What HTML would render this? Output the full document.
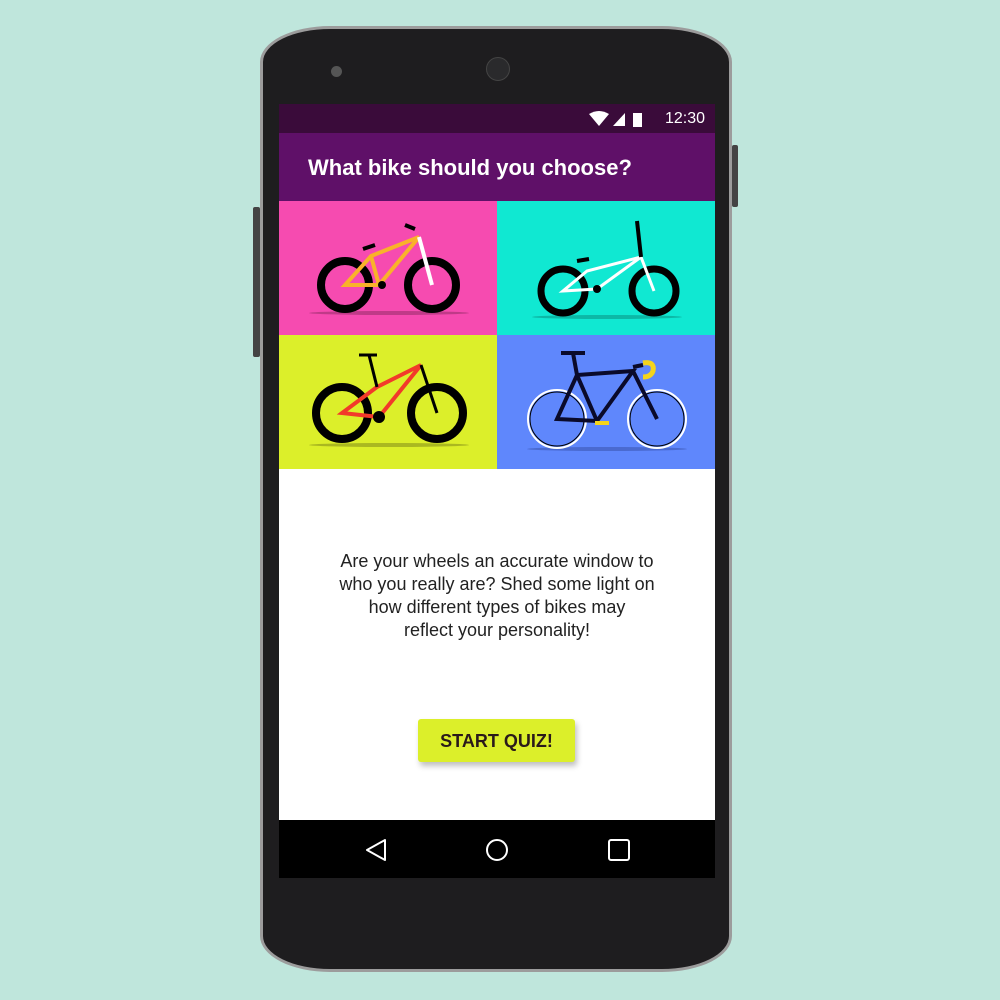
<!DOCTYPE html>
<html><head><style>
body{margin:0;width:1000px;height:1000px;background:#bfe6dc;position:relative;overflow:hidden;font-family:"Liberation Sans",sans-serif}
.phone{position:absolute;left:260px;top:26px;width:472px;height:946px;background:#1e1d1f;border:3px solid #9c9c9c;border-radius:70px/36px;box-sizing:border-box}
.btn{position:absolute;background:#444;border-radius:2px}
.screen{position:absolute;left:279px;top:104px;width:436px;height:774px;background:#fff;overflow:hidden}
.sb{height:29px;background:#3a0b3a;color:#fff;font-size:16px;text-align:right;line-height:29px;padding-right:10px;position:relative}
.ab{height:68px;background:#5f1068;color:#fff;font-size:22px;font-weight:bold;line-height:70px;padding-left:29px}
.tile{position:absolute;width:218px;height:134px}
.txt{position:absolute;top:446px;left:0;width:436px;text-align:center;font-size:18px;line-height:23px;color:#222}
.go{position:absolute;left:139px;top:615px;width:157px;height:43px;background:#dcef2a;border-radius:3px;box-shadow:2px 4px 6px rgba(0,0,0,.25);text-align:center;line-height:44px;font-weight:bold;font-size:18px;color:#2a1a1a}
.nav{position:absolute;left:0;top:716px;width:436px;height:58px;background:#000}
</style></head><body>
<div class="btn" style="left:253px;top:207px;width:7px;height:150px"></div>
<div class="btn" style="left:732px;top:145px;width:6px;height:62px"></div>
<div class="phone"></div>
<div style="position:absolute;left:331px;top:66px;width:11px;height:11px;border-radius:50%;background:#555"></div>
<div style="position:absolute;left:486px;top:57px;width:22px;height:22px;border-radius:50%;background:#2a2a2c;border:1px solid #444"></div>
<div class="screen">
<div class="sb"><svg width="60" height="16" style="position:absolute;left:310px;top:7px"><path d="M0 3 Q10 -3 20 3 L10 15Z" fill="#fff"/><path d="M24 15 L36 2 L36 15Z" fill="#fff"/><rect x="44" y="2" width="9" height="14" fill="#fff"/></svg>12:30</div>
<div class="ab">What bike should you choose?</div>
<div class="tile" style="left:0;top:97px;background:#f64bb0">
<svg width="218" height="134"><ellipse cx="110" cy="112" rx="80" ry="2" fill="#c03a88"/><g fill="none" stroke="#000" stroke-width="8"><circle cx="66" cy="84" r="24"/><circle cx="153" cy="84" r="24"/></g><path d="M66 84 L100 84 L140 36 L92 55 Z M100 84 L92 55" stroke="#f9b22a" stroke-width="4" fill="none"/><path d="M140 36 L153 84" stroke="#fff" stroke-width="4"/><path d="M84 48 L96 44 M126 24 L136 28" stroke="#000" stroke-width="4"/><circle cx="103" cy="84" r="4"/></svg></div>
<div class="tile" style="left:218px;top:97px;background:#10e8d2">
<svg width="218" height="134"><ellipse cx="110" cy="116" rx="75" ry="2" fill="#0cb8a6"/><g fill="none" stroke="#000" stroke-width="7"><circle cx="66" cy="90" r="22"/><circle cx="157" cy="90" r="22"/></g><path d="M66 90 L100 88 L144 56 L90 70 Z M144 56 L157 90" stroke="#fff" stroke-width="3" fill="none"/><path d="M140 20 L144 56 M80 60 L92 58" stroke="#000" stroke-width="4"/><circle cx="100" cy="88" r="4"/></svg></div>
<div class="tile" style="left:0;top:231px;background:#dcef2a">
<svg width="218" height="134"><ellipse cx="110" cy="110" rx="80" ry="2" fill="#aab820"/><g fill="none" stroke="#000" stroke-width="8"><circle cx="63" cy="78" r="26"/><circle cx="158" cy="78" r="26"/></g><path d="M63 78 L100 82 L142 30 L98 52 Z" stroke="#f23a2a" stroke-width="4" fill="none"/><path d="M142 30 L158 78 M90 20 L98 52 M80 20 L98 20" stroke="#000" stroke-width="3"/><circle cx="100" cy="82" r="6"/></svg></div>
<div class="tile" style="left:218px;top:231px;background:#5f87fc">
<svg width="218" height="134"><ellipse cx="110" cy="114" rx="80" ry="2" fill="#4a6ad0"/><g fill="none" stroke="#fff" stroke-width="2"><circle cx="60" cy="84" r="29"/><circle cx="160" cy="84" r="29"/></g><g fill="none" stroke="#000" stroke-width="1"><circle cx="60" cy="84" r="27"/><circle cx="160" cy="84" r="27"/></g><path d="M60 84 L100 86 L136 36 L80 40 Z M100 86 L80 40 L76 18 M136 36 L160 84 M64 18 L88 18 M136 32 L146 30" stroke="#0a0a2a" stroke-width="4" fill="none"/><path d="M146 28 Q158 26 156 36 Q154 42 146 42" stroke="#f4d41c" stroke-width="5" fill="none"/><rect x="98" y="86" width="14" height="4" fill="#f4d41c"/></svg></div>
<div class="txt">Are your wheels an accurate window to<br>who you really are? Shed some light on<br>how different types of bikes may<br>reflect your personality!</div>
<div class="go">START QUIZ!</div>
<div class="nav"><svg width="436" height="58"><path d="M106 20 L88 30 L106 40 Z" fill="none" stroke="#fff" stroke-width="2" stroke-linejoin="round"/><circle cx="218" cy="30" r="10" fill="none" stroke="#fff" stroke-width="2"/><rect x="330" y="20" width="20" height="20" rx="2" fill="none" stroke="#fff" stroke-width="2"/></svg></div>
</div>
</body></html>
